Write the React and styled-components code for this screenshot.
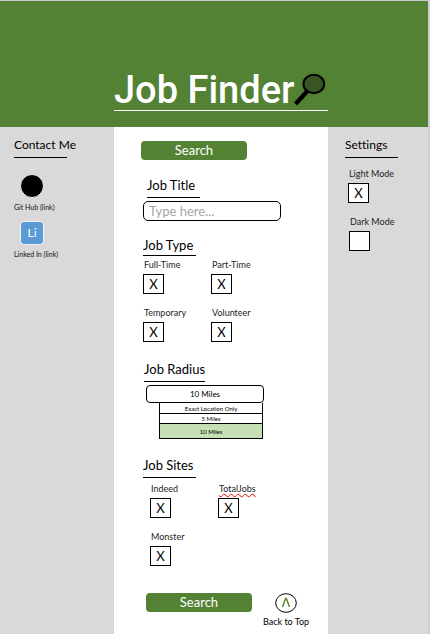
import React, { useState } from "react";
import styled, { createGlobalStyle } from "styled-components";

const GREEN = "#548235";
const columns = "minmax(114px, 114fr) minmax(214px, 214fr) minmax(100px, 100fr)";

const GlobalStyle = createGlobalStyle`
  *, *::before, *::after { box-sizing: border-box; }
  body { margin: 0; background: #fff; }
  body, button, input, select {
    font-family: Lato, "Open Sans", sans-serif;
    font-variant-ligatures: none;
    color: #000;
  }
`;

const Page = styled.div`
  min-height: 100vh;
  display: flex;
  flex-direction: column;
  border-top: 1px solid #c9c9c9;
  border-right: 2px solid #cdcfd3;
`;

const Header = styled.header`
  display: grid;
  grid-template-columns: ${columns};
  background: ${GREEN};
  padding: 68px 0 16px;
`;

const Brand = styled.div`
  grid-column: 2;
  display: flex;
  align-items: center;
  justify-content: space-between;
  height: 42px;
  border-bottom: 1px solid #fff;
`;

const Title = styled.h1`
  margin: 0;
  color: #fff;
  font: 500 38px/42px Roboto, sans-serif;
  white-space: nowrap;
`;

const Lens = styled.svg`
  width: 34px;
  height: 34px;
  flex: none;
`;

const Body = styled.div`
  flex: 1;
  display: grid;
  grid-template-columns: ${columns};
`;

const Side = styled.aside`
  background: #d9d9d9;
  padding: 10px 0 0 ${(p) => p.$inset}px;
`;

const Main = styled.main`
  background: #fff;
  padding: 14px 0 6px 27px;
`;

const Section = styled.section`
  padding: ${(p) => p.$top}px 0 0 ${(p) => p.$inset || 0}px;
`;

const Heading = styled.h2`
  display: block;
  margin: 0 0 0 ${(p) => p.$inset || 0}px;
  width: ${(p) => p.$width || 53}px;
  padding: 0 0 ${(p) => (p.$tight ? 2 : 4)}px;
  border-bottom: 1px solid #000;
  font-size: ${(p) => (p.$small ? 12 : 13)}px;
  font-weight: 400;
  line-height: 16px;
  white-space: nowrap;
`;

const SearchButton = styled.button`
  display: block;
  width: 106px;
  height: 19px;
  padding: 0;
  border: 0;
  border-radius: 4px;
  background: ${GREEN};
  color: #fff;
  font-size: 13px;
  line-height: 19px;
`;

const TextBox = styled.input`
  display: block;
  width: 138px;
  height: 20px;
  margin-top: 3px;
  padding: 0 5px;
  border: 1px solid #000;
  border-radius: 5px;
  background: #fff;
  font-size: 13px;
  &::placeholder { color: #a6a6a6; opacity: 1; }
`;

const Checks = styled.div`
  display: grid;
  grid-template-columns: 68px 68px;
  row-gap: 13px;
  padding: ${(p) => p.$top}px 0 0 ${(p) => p.$inset || 0}px;
`;

const CheckLabel = styled.label`
  display: grid;
  grid-template-columns: 21px;
  grid-template-rows: 12px 20px;
  row-gap: 3px;
  width: max-content;
`;

const Caption = styled.span`
  grid-area: 1 / 1;
  padding-left: 1px;
  color: #222;
  font-size: 9px;
  line-height: 12px;
  white-space: nowrap;
`;

const Misspelled = styled.span`
  text-decoration: underline wavy #f00 1px;
  text-decoration-skip-ink: none;
  text-underline-offset: 1px;
`;

const Box = styled.input`
  grid-area: 2 / 1;
  appearance: none;
  width: 21px;
  height: 20px;
  margin: 0;
  border: 1px solid #000;
  background: #fff;
`;

const Mark = styled.span`
  grid-area: 2 / 1;
  z-index: 1;
  pointer-events: none;
  font-size: 13px;
  line-height: 20px;
  text-align: center;
`;

const Select = styled.select`
  appearance: none;
  display: block;
  width: 118px;
  height: 18px;
  padding: 0;
  border: 1px solid #000;
  border-radius: 4px;
  background: #fff;
  font-size: 8px;
  text-align: center;
  text-align-last: center;
`;

const Options = styled.ul`
  width: 104px;
  margin: 0 0 0 13px;
  padding: 0;
  list-style: none;
  border: 1px solid #000;
  border-top: 0;
`;

const Option = styled.li`
  & + & { border-top: 1px solid #000; }
`;

const OptionButton = styled.button`
  display: block;
  width: 100%;
  height: ${(p) => p.$height}px;
  padding: 0;
  border: 0;
  background: ${(p) => (p.$active ? "#c5e0b4" : "#fff")};
  font-size: 6px;
  line-height: 9px;
`;

const SiteLinks = styled.nav`
  display: flex;
  flex-direction: column;
  gap: 9px;
  padding-top: 16px;
`;

const SiteLink = styled.a`
  display: flex;
  flex-direction: column;
  align-items: flex-start;
  gap: 4px;
  color: #111;
  font-size: 7px;
  line-height: 10px;
  text-decoration: none;
`;

const Badge = styled.span`
  width: 24px;
  height: 24px;
  margin-left: 6px;
  border: 1px solid #f2f2f2;
  border-radius: ${(p) => (p.$round ? "50%" : "4px")};
  background: ${(p) => (p.$round ? "#000" : "#5b9bd5")};
  color: #fff;
  font-size: 12px;
  line-height: 22px;
  text-align: center;
`;

const Footer = styled.div`
  display: flex;
  align-items: flex-start;
  gap: 11px;
  padding: 27px 0 0 5px;
`;

const TopLink = styled.a`
  display: flex;
  flex-direction: column;
  align-items: center;
  gap: 3px;
  color: #000;
  font-size: 9px;
  line-height: 12px;
  text-decoration: none;
  white-space: nowrap;
`;

const TopIcon = styled.svg`
  width: 22px;
  height: 20px;
`;

function Check({ label, misspelled, defaultChecked = true }) {
  const [on, setOn] = useState(defaultChecked);
  return (
    <CheckLabel>
      <Caption>{misspelled ? <Misspelled>{label}</Misspelled> : label}</Caption>
      <Box type="checkbox" checked={on} onChange={() => setOn(!on)} />
      {on && <Mark aria-hidden="true">X</Mark>}
    </CheckLabel>
  );
}

const radii = [
  { name: "Exact Location Only", height: 10 },
  { name: "5 Miles", height: 9 },
  { name: "10 Miles", height: 14 },
];

export default function App() {
  const [radius, setRadius] = useState("10 Miles");
  return (
    <Page id="top">
      <GlobalStyle />
      <Header>
        <Brand>
          <Title>Job Finder</Title>
          <Lens viewBox="0 0 34 34" aria-hidden="true">
            <path d="M1.5 31 13 18.5" stroke="#000" strokeWidth="4.4" />
            <ellipse cx="19.8" cy="11" rx="10.4" ry="9.2" fill="#375623" stroke="#000" strokeWidth="2" />
          </Lens>
        </Brand>
      </Header>
      <Body>
        <Side $inset={14}>
          <Heading $small>Contact Me</Heading>
          <SiteLinks>
            <SiteLink href="#github">
              <Badge $round />
              Git Hub (link)
            </SiteLink>
            <SiteLink href="#linkedin">
              <Badge>Li</Badge>
              Linked In (link)
            </SiteLink>
          </SiteLinks>
        </Side>
        <Main>
          <SearchButton type="button">Search</SearchButton>
          <Section $top={17} $inset={2}>
            <Heading as="label" htmlFor="job-title" $inset={4}>Job Title</Heading>
            <TextBox id="job-title" placeholder="Type here..." />
          </Section>
          <Section $top={16} $inset={2}>
            <Heading $tight>Job Type</Heading>
            <Checks $top={3}>
              <Check label="Full-Time" />
              <Check label="Part-Time" />
              <Check label="Temporary" />
              <Check label="Volunteer" />
            </Checks>
          </Section>
          <Section $top={19} $inset={3}>
            <Heading $width={61}>Job Radius</Heading>
            <Section as="div" $top={3} $inset={2}>
              <Select aria-label="Job Radius" value={radius} onChange={(e) => setRadius(e.target.value)}>
                {radii.map((r) => <option key={r.name}>{r.name}</option>)}
              </Select>
              <Options>
                {radii.map((r) => (
                  <Option key={r.name}>
                    <OptionButton
                      type="button"
                      $height={r.height}
                      $active={r.name === radius}
                      onClick={() => setRadius(r.name)}
                    >
                      {r.name}
                    </OptionButton>
                  </Option>
                ))}
              </Options>
            </Section>
          </Section>
          <Section $top={18} $inset={2}>
            <Heading>Job Sites</Heading>
            <Checks $top={5} $inset={7}>
              <Check label="Indeed" />
              <Check label="TotalJobs" misspelled />
              <Check label="Monster" />
            </Checks>
          </Section>
          <Footer>
            <SearchButton type="button">Search</SearchButton>
            <TopLink href="#top">
              <TopIcon viewBox="0 0 22 20" aria-hidden="true">
                <ellipse cx="11" cy="10" rx="10.3" ry="9.3" fill="#fff" stroke="#000" />
                <path d="M7.5 14 10.6 5.5h.8L14.5 14" fill="none" stroke={GREEN} strokeWidth="1.4" />
              </TopIcon>
              Back to Top
            </TopLink>
          </Footer>
        </Main>
        <Side $inset={17}>
          <Heading $small>Settings</Heading>
          <Checks $top={10} $inset={3}>
            <Check label="Light Mode" />
          </Checks>
          <Checks $top={13} $inset={4}>
            <Check label="Dark Mode" defaultChecked={false} />
          </Checks>
        </Side>
      </Body>
    </Page>
  );
}
